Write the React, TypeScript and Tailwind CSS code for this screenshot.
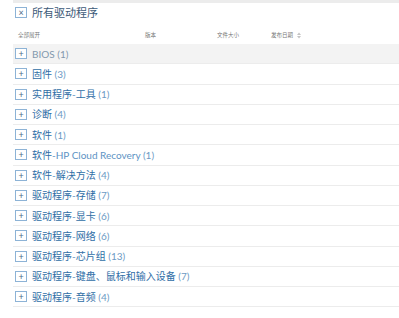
import React from 'react';

type Row = { cn: string; latin?: string; tail?: string; count: number };

const ROWS: Row[] = [
  { cn: '', latin: 'BIOS', count: 1 },
  { cn: '固件', count: 3 },
  { cn: '实用程序', latin: '-', tail: '工具', count: 1 },
  { cn: '诊断', count: 4 },
  { cn: '软件', count: 1 },
  { cn: '软件', latin: '-HP Cloud Recovery', count: 1 },
  { cn: '软件', latin: '-', tail: '解决方法', count: 4 },
  { cn: '驱动程序', latin: '-', tail: '存储', count: 7 },
  { cn: '驱动程序', latin: '-', tail: '显卡', count: 6 },
  { cn: '驱动程序', latin: '-', tail: '网络', count: 6 },
  { cn: '驱动程序', latin: '-', tail: '芯片组', count: 13 },
  { cn: '驱动程序', latin: '-', tail: '键盘、鼠标和输入设备', count: 7 },
  { cn: '驱动程序', latin: '-', tail: '音频', count: 4 },
];

const font = { fontFamily: 'Lato, "Noto Sans CJK SC", sans-serif' };

const Box = ({ children }: { children: React.ReactNode }) => (
  <span className="flex h-[11px] w-[12px] shrink-0 items-center justify-center border border-[#8db3d6] bg-white text-[9px] leading-none text-[#4a6a88]">
    {children}
  </span>
);

const App = () => {
  return (
    <div className="h-[318px] w-[399px] overflow-hidden bg-white" style={font}>
      <div className="ml-[13px] h-[3px] bg-[#ececec]" />
      <div className="flex h-[16px] items-center gap-[5px] pl-[15px] pt-[3px]">
        <Box>×</Box>
        <span className="text-[11px] leading-none text-[#3d5a78]">所有驱动程序</span>
      </div>
      <div className="mt-[11px] flex h-[11px] items-center pl-[18px] text-[5.5px] leading-none text-[#777]">
        <span className="w-[127px]">全部展开</span>
        <span className="w-[72px]">版本</span>
        <span className="w-[54px]">文件大小</span>
        <span className="flex items-center gap-[4px]">
          发布日期
          <svg width="4" height="7" viewBox="0 0 4 7">
            <path d="M0 3 L2 0.5 L4 3 Z M0 4 L2 6.5 L4 4 Z" fill="#c4c4c4" />
          </svg>
        </span>
      </div>
      <div className="ml-[13px] mt-[3px]">
        {ROWS.map((r, i) => (
          <div
            key={i}
            className={`flex h-[20.25px] items-center gap-[5px] border-b-[1.5px] border-[#ececec] pl-[2px] ${
              i === 0 ? 'bg-[#f3f3f3]' : ''
            }`}
          >
            <Box>+</Box>
            <span className="whitespace-nowrap text-[10px] leading-none">
              {r.cn && <span className="text-[#2f6ea6]">{r.cn}</span>}
              {r.latin && (
                <span className={i === 0 ? 'text-[#8298ad]' : 'text-[#5d93c4]'}>{r.latin}</span>
              )}
              {r.tail && <span className="text-[#2f6ea6]">{r.tail}</span>}
              <span className={i === 0 ? 'text-[#8298ad]' : 'text-[#6c9ac4]'}> ({r.count})</span>
            </span>
          </div>
        ))}
      </div>
    </div>
  );
};

export default App;
